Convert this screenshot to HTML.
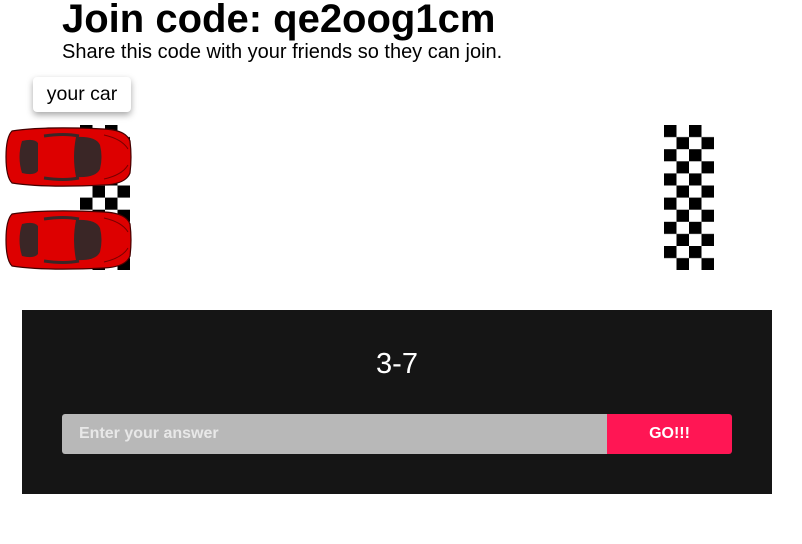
<!DOCTYPE html>
<html><head><style>
body{margin:0;width:802px;height:544px;background:#fff;font-family:"Liberation Sans",sans-serif;position:relative;overflow:hidden}
h1{position:absolute;left:62px;top:-3px;margin:0;font-size:40px;font-weight:bold;color:#000}
.sub{position:absolute;left:62px;top:41px;font-size:20px;color:#000}
.tag{position:absolute;left:33px;top:77px;width:98px;height:35px;background:#fff;border-radius:4px;box-shadow:0 3px 7px rgba(0,0,0,.35);font-size:19.5px;line-height:35px;text-align:center}
.panel{position:absolute;left:22px;top:310px;width:750px;height:184px;background:#151515}
.q{position:absolute;left:22px;width:750px;top:348px;text-align:center;color:#fff;font-size:29px}
.inp{position:absolute;left:62px;top:414px;width:545px;height:40px;background:#b8b8b8;border-radius:3px 0 0 3px;color:#e8e8e8;font-weight:bold;font-size:16px;line-height:40px;text-indent:17px}
.btn{position:absolute;left:607px;top:414px;width:125px;height:40px;background:#ff1654;border-radius:0 3px 3px 0;color:#fff;font-weight:bold;font-size:16px;line-height:40px;text-align:center}
svg{position:absolute;left:0;top:0}
</style></head><body>
<h1>Join code: qe2oog1cm</h1>
<div class="sub">Share this code with your friends so they can join.</div>
<svg width="802" height="300">
<defs>
<pattern id="ck" x="0" y="0" width="25" height="24.2" patternUnits="userSpaceOnUse">
<rect x="0" y="0" width="12.5" height="12.1" fill="#000"/><rect x="12.5" y="12.1" width="12.5" height="12.1" fill="#000"/>
</pattern>
<g id="car">
<path d="M8,4 Q40,-1 100,2 Q122,3 126,14 Q128,30 126,46 Q122,57 100,58 Q40,61 8,56 Q2,50 2,30 Q2,10 8,4Z" fill="#d00" stroke="#400" stroke-width="1.2"/>
<path d="M18,14 Q30,11 34,16 L34,44 Q30,49 18,46 Q13,30 18,14Z" fill="#3a2626"/>
<path d="M72,10 Q92,9 96,18 Q99,30 96,42 Q92,51 72,50 Q68,30 72,10Z" fill="#3a2626"/>
<path d="M40,9 Q60,6 75,9 M40,51 Q60,54 75,51" stroke="#3a2626" stroke-width="3" fill="none"/>
<path d="M100,8 Q118,12 124,22 M100,52 Q118,48 124,38" stroke="#700" stroke-width="1" fill="none"/>
</g>
</defs>
<g transform="translate(664,125)"><rect x="0" y="0" width="50" height="145" fill="url(#ck)"/></g>
<g transform="translate(80,125)"><rect x="0" y="0" width="50" height="145" fill="url(#ck)"/></g>
<use href="#car" x="4" y="127"/>
<use href="#car" x="4" y="210"/>
</svg>
<div class="tag">your car</div>
<div class="panel"></div>
<div class="q">3-7</div>
<div class="inp">Enter your answer</div>
<div class="btn">GO!!!</div>
</body></html>
